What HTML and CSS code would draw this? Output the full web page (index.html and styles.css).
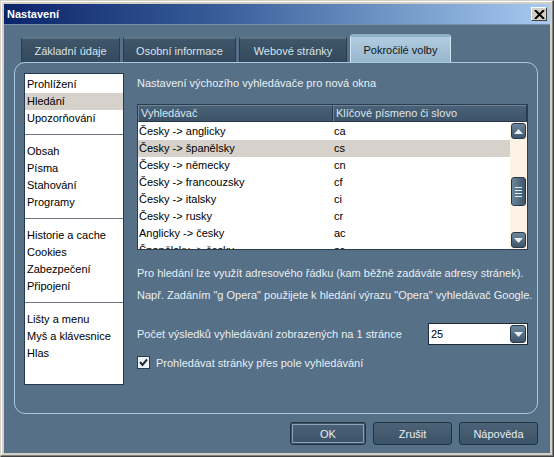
FILE: index.html
```html
<!DOCTYPE html>
<html>
<head>
<meta charset="utf-8">
<link rel="stylesheet" href="styles.css">
</head>
<body>
<div class="window">
  <div class="titlebar">
    <span class="title">Nastavení</span>
    <span class="close"><svg width="11" height="9" viewBox="0 0 11 9"><path d="M1 0 L10 9 M10 0 L1 9" stroke="#000" stroke-width="2"/></svg></span>
  </div>
  <div class="content">
    <div class="tabs">
      <div class="tab t1">Základní údaje</div>
      <div class="tab t2">Osobní informace</div>
      <div class="tab t3">Webové stránky</div>
      <div class="tab active">Pokročilé volby</div>
    </div>
    <div class="panel">
      <div class="sidebar">
        <div class="item">Prohlížení</div>
        <div class="item sel">Hledání</div>
        <div class="item">Upozorňování</div>
        <div class="sep"></div>
        <div class="item">Obsah</div>
        <div class="item">Písma</div>
        <div class="item">Stahování</div>
        <div class="item">Programy</div>
        <div class="sep"></div>
        <div class="item">Historie a cache</div>
        <div class="item">Cookies</div>
        <div class="item">Zabezpečení</div>
        <div class="item">Připojení</div>
        <div class="sep"></div>
        <div class="item">Lišty a menu</div>
        <div class="item">Myš a klávesnice</div>
        <div class="item">Hlas</div>
      </div>
      <div class="main">
        <div class="heading">Nastavení výchozího vyhledávače pro nová okna</div>
        <div class="table">
          <div class="thead">
            <div class="th c1">Vyhledávač</div>
            <div class="th c2">Klíčové písmeno či slovo</div>
          </div>
          <div class="tbody">
            <div class="rows">
              <div class="row"><span class="c1">Česky -&gt; anglicky</span><span class="c2">ca</span></div>
              <div class="row sel"><span class="c1">Česky -&gt; španělsky</span><span class="c2">cs</span></div>
              <div class="row"><span class="c1">Česky -&gt; německy</span><span class="c2">cn</span></div>
              <div class="row"><span class="c1">Česky -&gt; francouzsky</span><span class="c2">cf</span></div>
              <div class="row"><span class="c1">Česky -&gt; italsky</span><span class="c2">ci</span></div>
              <div class="row"><span class="c1">Česky -&gt; rusky</span><span class="c2">cr</span></div>
              <div class="row"><span class="c1">Anglicky -&gt; česky</span><span class="c2">ac</span></div>
              <div class="row"><span class="c1">Španělsky -&gt; česky</span><span class="c2">sc</span></div>
            </div>
            <div class="scrollbar">
              <div class="sbtn"><svg width="9" height="5" viewBox="0 0 9 5"><path d="M0 5 L4.5 0 L9 5 Z" fill="#e8eef2"/></svg></div>
              <div class="track">
                <div class="thumb"><span></span><span></span><span></span><span></span></div>
              </div>
              <div class="sbtn"><svg width="9" height="5" viewBox="0 0 9 5"><path d="M0 0 L4.5 5 L9 0 Z" fill="#e8eef2"/></svg></div>
            </div>
          </div>
        </div>
        <div class="info first">Pro hledání lze využít adresového řádku (kam běžně zadáváte adresy stránek).</div>
        <div class="info">Např. Zadáním "g Opera" použijete k hledání výrazu "Opera" vyhledávač Google.</div>
        <div class="count">
          <span>Počet výsledků vyhledávání zobrazených na 1 stránce</span>
          <div class="select"><span class="val">25</span><span class="dd"><svg width="9" height="5" viewBox="0 0 9 5"><path d="M0 0 L4.5 5 L9 0 Z" fill="#e8eef2"/></svg></span></div>
        </div>
        <div class="check">
          <span class="box"><svg width="9" height="9" viewBox="0 0 9 9"><path d="M1 4 L3.5 7 L8 1.5" stroke="#1a2a3a" stroke-width="2" fill="none"/></svg></span>
          <span>Prohledávat stránky přes pole vyhledávání</span>
        </div>
      </div>
    </div>
    <div class="buttons">
      <div class="btn ok">OK</div>
      <div class="btn b2">Zrušit</div>
      <div class="btn b3">Nápověda</div>
    </div>
  </div>
</div>
</body>
</html>
```
FILE: styles.css
```css
* { box-sizing: border-box; }
body {
  margin: 0;
  background: #d4d0c8;
  font-family: "Liberation Sans", Arial, sans-serif;
  font-size: 11px;
}
.window {
  width: 554px;
  height: 457px;
  background: #d4d0c8;
  border-top: 1px solid #d4d0c8;
  border-left: 1px solid #d4d0c8;
  border-right: 1px solid #404040;
  border-bottom: 1px solid #404040;
  padding: 3px;
  display: flex;
  flex-direction: column;
  box-shadow: inset -1px -1px 0 #808080, inset 1px 1px 0 #ffffff;
}
.titlebar {
  height: 20px;
  flex: none;
  background: linear-gradient(to right, #0a246a, #3a5e9a 40%, #a6caf0);
  display: flex;
  align-items: center;
  justify-content: space-between;
  padding: 0 3px;
}
.title {
  color: #fff;
  font-weight: bold;
  font-size: 11px;
}
.close {
  width: 16px;
  height: 14px;
  background: #d4d0c8;
  border: 1px solid;
  border-color: #fff #404040 #404040 #fff;
  display: flex;
  align-items: center;
  justify-content: center;
}
.content {
  flex: 1;
  background: #557087;
  border-top: 1px solid #7890a4;
  display: flex;
  flex-direction: column;
  color: #e9eff4;
}
.tabs {
  display: flex;
  align-items: flex-end;
  height: 37px;
  padding-left: 17px;
  gap: 3px;
}
.tab {
  height: 26px;
  background: linear-gradient(#3f5569, #34495c);
  border: 1px solid #2a3b4b;
  border-bottom: none;
  border-top: 3px solid #5d7488;
  border-radius: 3px 3px 0 0;
  color: #d8e2ea;
  display: flex;
  align-items: center;
  justify-content: center;
  font-size: 11px;
  padding-top: 1px;
}
.t1 { width: 99px; }
.t2 { width: 113px; }
.t3 { width: 108px; }
.tab.active {
  width: 101px;
  height: 28px;
  background: linear-gradient(#b0cce0, #97b7cd);
  border: 1px solid #d4e4f0;
  border-bottom: none;
  border-top: 3px solid #8fb1ca;
  color: #101820;
}
.panel {
  margin-left: 10px;
  width: 524px;
  height: 352px;
  border: 1px solid #a9c8e0;
  border-radius: 11px;
  display: flex;
  padding: 10px 0 0 9px;
  gap: 13px;
}
.sidebar {
  width: 100px;
  height: 312px;
  background: #fff;
  border: 1px solid #27384a;
  color: #000;
  padding-top: 2px;
}
.item {
  height: 17px;
  line-height: 17px;
  padding-left: 2px;
}
.item.sel { background: #d6d2cb; }
.sep {
  height: 1px;
  background: #6d7680;
  margin: 7px 0 8px;
}
.main {
  width: 391px;
  display: flex;
  flex-direction: column;
}
.heading {
  height: 20px;
  line-height: 16px;
  padding-top: 2px;
}
.table {
  margin-top: 11px;
  height: 146px;
  border: 1px solid #2b3c4c;
  background: #fff;
  display: flex;
  flex-direction: column;
}
.thead {
  height: 17px;
  flex: none;
  display: flex;
  background: linear-gradient(#4b6378, #3b5267);
}
.th {
  line-height: 15px;
  color: #dce6ee;
  border: 1px solid #6d8498;
  border-right-color: #27384a;
  border-bottom-color: #27384a;
  padding-left: 2px;
}
.th.c1 { width: 195px; }
.th.c2 { flex: 1; }
.tbody {
  flex: 1;
  display: flex;
  overflow: hidden;
}
.rows {
  flex: 1;
  color: #000;
  overflow: hidden;
  padding-top: 1px;
}
.row {
  height: 17px;
  line-height: 17px;
  display: flex;
}
.row.sel { background: #d6d2cb; }
.row .c1 { width: 195px; padding-left: 1px; }
.row .c2 { padding-left: 1px; }
.scrollbar {
  width: 17px;
  background: #fcf3e6;
  display: flex;
  flex-direction: column;
  padding: 1px;
}
.sbtn {
  height: 16px;
  flex: none;
  background: linear-gradient(#6c879c, #3e566b);
  border: 1px solid #27384a;
  border-radius: 3px;
  display: flex;
  align-items: center;
  justify-content: center;
}
.track {
  flex: 1;
  position: relative;
}
.thumb {
  position: absolute;
  top: 38px;
  left: 0;
  width: 15px;
  height: 29px;
  background: linear-gradient(to right, #6c879c, #3e566b);
  border: 1px solid #27384a;
  border-radius: 3px;
  display: flex;
  flex-direction: column;
  align-items: center;
  justify-content: center;
  gap: 2px;
}
.thumb span {
  width: 7px;
  height: 1px;
  background: #e0e8ee;
}
.info {
  line-height: 16px;
  margin-top: 6px;
  white-space: nowrap;
}
.info.first { margin-top: 15px; }
.count {
  display: flex;
  align-items: center;
  justify-content: space-between;
  margin-top: 20px;
  height: 22px;
}
.select {
  width: 100px;
  height: 22px;
  background: #fff;
  border: 1px solid #1e2c3a;
  color: #000;
  display: flex;
  align-items: center;
  justify-content: space-between;
  padding: 0 1px 0 2px;
}
.dd {
  width: 16px;
  height: 18px;
  background: linear-gradient(#6c879c, #3e566b);
  border: 1px solid #27384a;
  border-radius: 3px;
  display: flex;
  align-items: center;
  justify-content: center;
}
.check {
  display: flex;
  align-items: center;
  gap: 6px;
  margin-top: 11px;
}
.box {
  width: 13px;
  height: 13px;
  background: #eef2f5;
  border: 1px solid #2b3c4c;
  display: flex;
  align-items: center;
  justify-content: center;
}
.buttons {
  display: flex;
  justify-content: flex-end;
  gap: 7px;
  padding-right: 12px;
  margin-top: 8px;
}
.btn {
  height: 23px;
  background: linear-gradient(#4b6277, #3c5267);
  border: 1px solid #22313f;
  border-radius: 3px;
  color: #e6edf3;
  display: flex;
  align-items: center;
  justify-content: center;
}
.btn.ok { width: 76px; box-shadow: inset 0 0 0 1px #3c5267, inset 0 0 0 2px #8aa3b8; }
.b2 { width: 79px; }
.b3 { width: 79px; }
```
